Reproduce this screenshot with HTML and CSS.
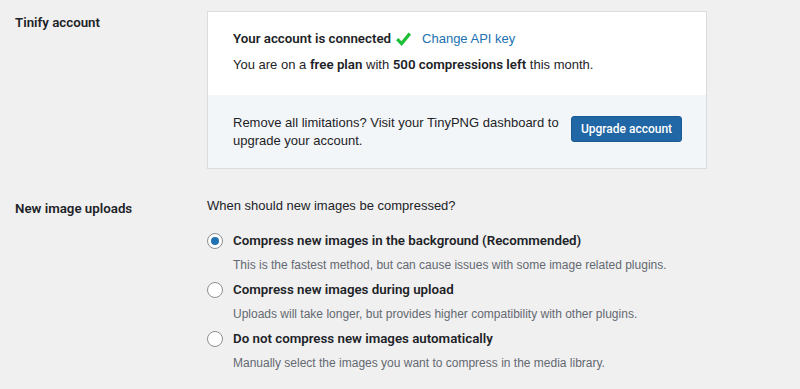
FILE: index.html
```html
<!DOCTYPE html>
<html>
<head>
<meta charset="utf-8">
<link rel="stylesheet" href="styles.css">
</head>
<body>
<div class="page">
  <div class="row row-account">
    <div class="label">Tinify account</div>
    <div class="field">
      <div class="card">
        <div class="card-top">
          <p class="status"><strong>Your account is connected</strong>
            <svg class="check" width="15" height="14" viewBox="0 0 15 14"><path d="M1.2 7.2 L5.6 11.6 L13.8 1.6" fill="none" stroke="#1fbf37" stroke-width="3.2" stroke-linejoin="miter"/></svg>
            <a class="link" href="#">Change API key</a></p>
          <p class="plan">You are on a <strong>free plan</strong> with <strong>500 compressions left</strong> this month.</p>
        </div>
        <div class="card-bottom">
          <p class="upsell">Remove all limitations? Visit your TinyPNG dashboard to upgrade your account.</p>
          <button class="btn">Upgrade account</button>
        </div>
      </div>
    </div>
  </div>
  <div class="row row-uploads">
    <div class="label">New image uploads</div>
    <div class="field">
      <p class="question">When should new images be compressed?</p>
      <div class="option">
        <span class="radio checked"></span>
        <div class="opt-text">
          <div class="opt-title">Compress new images in the background (Recommended)</div>
          <div class="opt-desc">This is the fastest method, but can cause issues with some image related plugins.</div>
        </div>
      </div>
      <div class="option">
        <span class="radio"></span>
        <div class="opt-text">
          <div class="opt-title">Compress new images during upload</div>
          <div class="opt-desc">Uploads will take longer, but provides higher compatibility with other plugins.</div>
        </div>
      </div>
      <div class="option">
        <span class="radio"></span>
        <div class="opt-text">
          <div class="opt-title">Do not compress new images automatically</div>
          <div class="opt-desc">Manually select the images you want to compress in the media library.</div>
        </div>
      </div>
    </div>
  </div>
</div>
</body>
</html>
```
FILE: styles.css
```css
html, body {
  margin: 0;
  padding: 0;
  background: #f0f0f1;
}
body {
  font-family: "Liberation Sans", Arial, sans-serif;
  font-size: 13px;
  color: #1d2327;
  line-height: 18px;
}
p { margin: 0; }
strong,
.label,
.opt-title,
.btn {
  font-family: Roboto, "Liberation Sans", Arial, sans-serif;
  font-weight: 600;
  font-size: 13.3px;
}
.page {
  padding: 11px 0 0 15px;
}
.row {
  display: grid;
  grid-template-columns: 192px 500px;
}
.label {
  color: #1d2327;
  padding-top: 3px;
}
.card {
  background: #fff;
  border: 1px solid #dcdcde;
}
.card-top {
  padding: 18px 25px 21px 25px;
}
.status {
  display: flex;
  align-items: center;
  height: 18px;
}
.check {
  margin: 0 11px 0 5px;
}
.link {
  color: #2271b1;
  text-decoration: none;
}
.plan {
  margin-top: 8px;
}
.card-bottom {
  background: #f3f6f8;
  border-top: 1px solid #f3f6f8;
  padding: 18px 24px 18px 25px;
  display: flex;
  align-items: center;
  justify-content: space-between;
}
.upsell {
  width: 332px;
}
.btn {
  font-size: 12px;
  font-weight: 500;
  color: #fff;
  background: #2166a5;
  border: 1px solid #1b5a93;
  border-radius: 3px;
  height: 26px;
  width: 111px;
  padding: 0;
  margin-top: -6px;
}
.row-uploads {
  margin-top: 28px;
}
.question {
  margin-bottom: 17px;
}
.option {
  display: flex;
  align-items: flex-start;
  margin-bottom: 7px;
}
.radio {
  box-sizing: border-box;
  width: 16px;
  height: 16px;
  border: 1px solid #8c8f94;
  border-radius: 50%;
  background: #fff;
  margin-top: 1px;
  margin-right: 10px;
  flex: none;
  position: relative;
}
.radio.checked::after {
  content: "";
  position: absolute;
  left: 3px;
  top: 3px;
  width: 8px;
  height: 8px;
  border-radius: 50%;
  background: #2271b1;
}
.opt-title {
  color: #1d2327;
}
.opt-desc {
  color: #646970;
  font-size: 12px;
  margin-top: 6px;
}
```
